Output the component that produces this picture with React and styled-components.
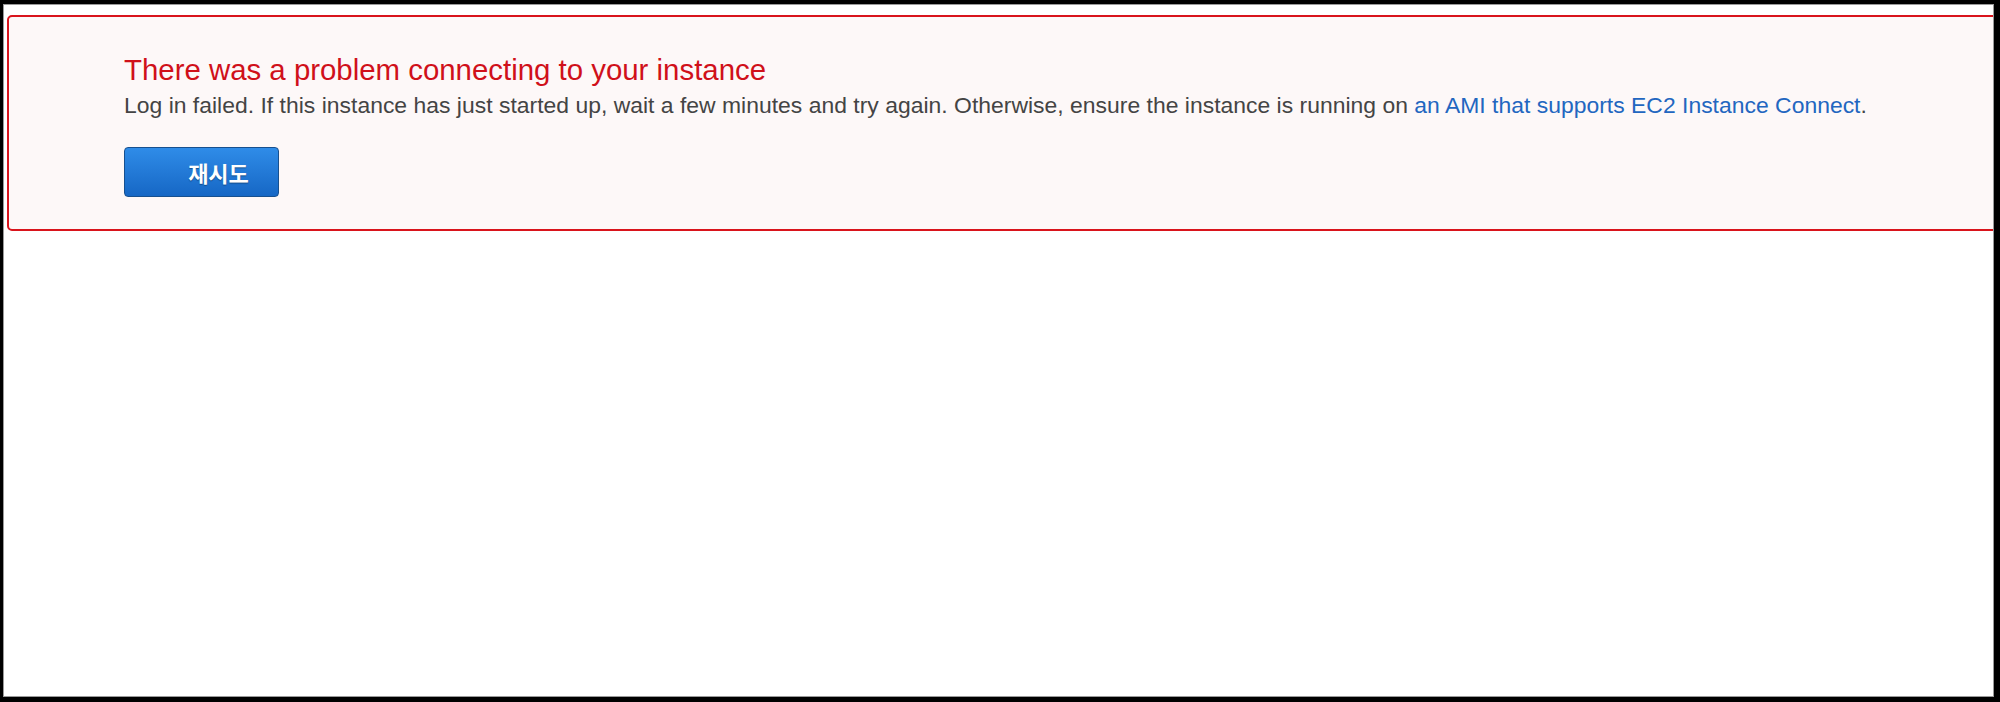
import React from "react";
import styled, { createGlobalStyle } from "styled-components";

const Global = createGlobalStyle`
  html, body { margin: 0; padding: 0; background: #000; }
  body { font-family: "Liberation Sans", Arial, sans-serif; }
`;

const Frame = styled.div`
  box-sizing: border-box;
  margin: 4px 6px 5px 3px;
  height: 693px;
  background: #fff;
  border: 1px solid #9a9a9a;
  overflow: hidden;
`;

const Alert = styled.section`
  box-sizing: border-box;
  margin: 10px 0 0 3px;
  width: calc(100% + 12px);
  height: 216px;
  border: 2px solid #d9141c;
  border-radius: 5px;
  background: #fdf8f8;
  padding: 36px 0 0 115px;
`;

const Title = styled.h2`
  margin: 0;
  font-family: "Liberation Sans", Arial, sans-serif;
  font-weight: normal;
  font-size: 29.4px;
  line-height: 33px;
  color: #d0101a;
`;

const Message = styled.p`
  margin: 6px 0 0;
  font-size: 22.9px;
  line-height: 26px;
  letter-spacing: 0.02px;
  color: #444;
`;

const Link = styled.a`
  color: #2266c0;
  text-decoration: none;
`;

const RetryButton = styled.button`
  box-sizing: border-box;
  margin-top: 29px;
  width: 155px;
  height: 50px;
  padding: 0 0 0 34px;
  border: 1px solid #17508f;
  border-radius: 4px;
  background: linear-gradient(#2f8ce8, #1667c5);
  color: #fff;
  font-family: "Noto Sans CJK KR", "Liberation Sans", sans-serif;
  font-weight: 700;
  font-size: 22px;
  text-shadow: 0 1px 1px rgba(0, 0, 0, 0.35);
  cursor: pointer;
`;

export default function App() {
  return (
    <>
      <Global />
      <Frame>
        <Alert>
          <Title>There was a problem connecting to your instance</Title>
          <Message>
            Log in failed. If this instance has just started up, wait a few minutes and try again. Otherwise, ensure the
            instance is running on <Link href="#">an AMI that supports EC2 Instance Connect</Link>.
          </Message>
          <RetryButton>재시도</RetryButton>
        </Alert>
      </Frame>
    </>
  );
}
